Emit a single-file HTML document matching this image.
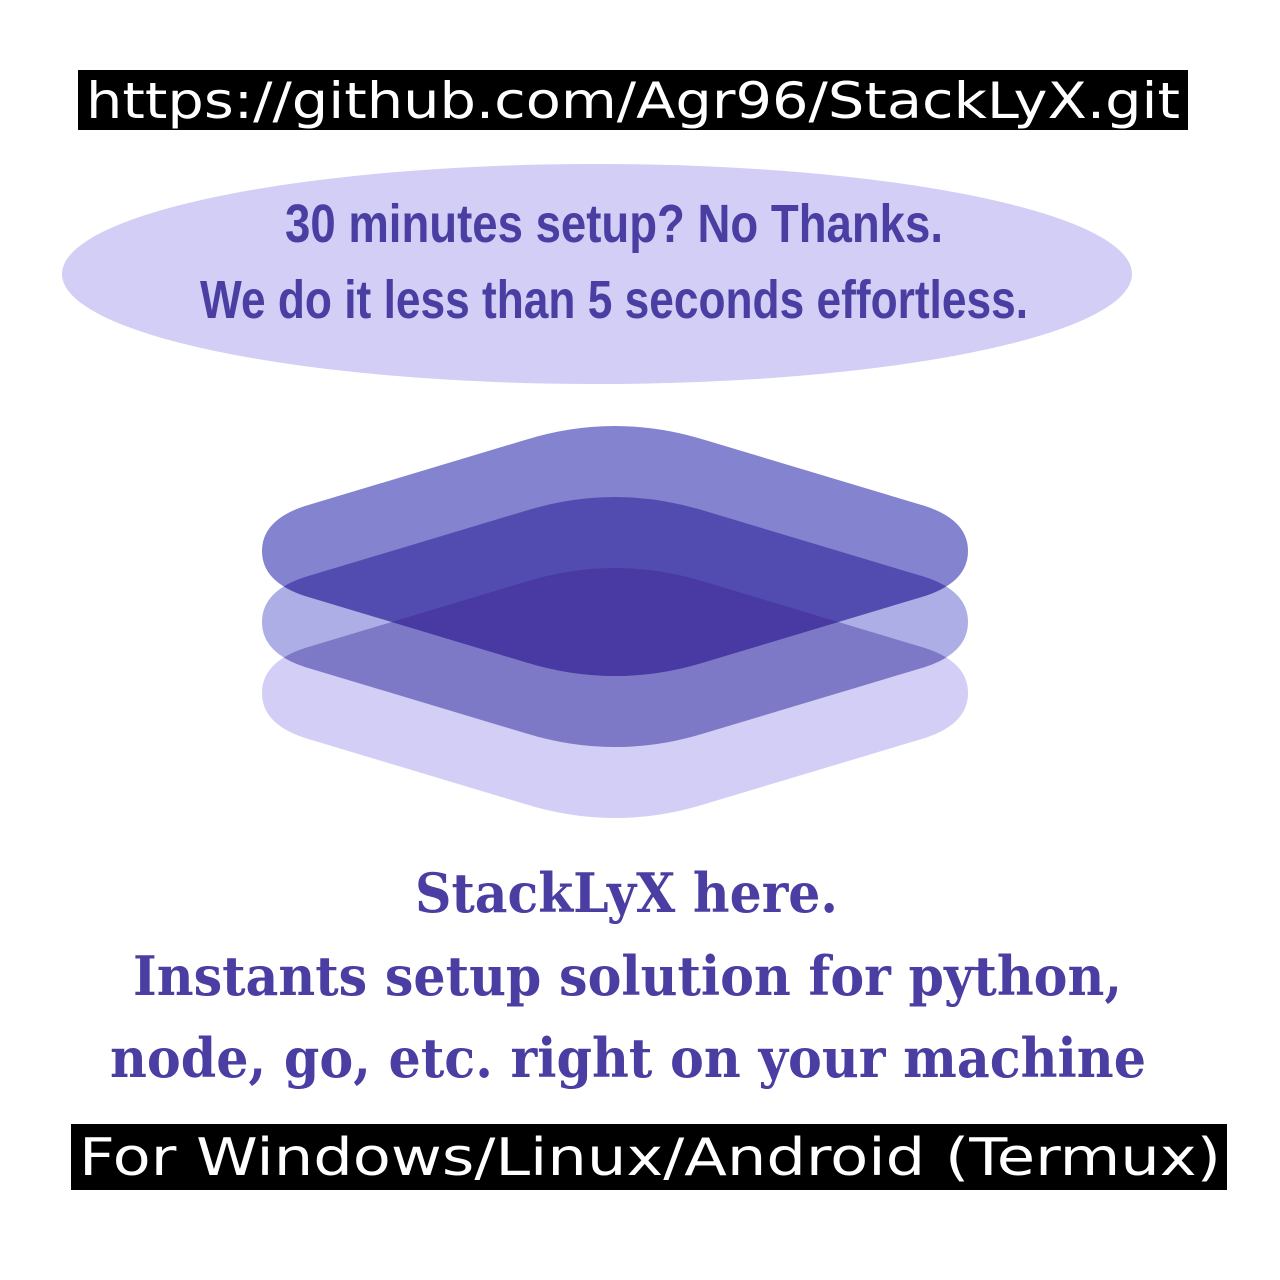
<!DOCTYPE html>
<html><head><meta charset="utf-8"><style>html,body{margin:0;padding:0;background:#fff}svg{display:block}</style></head>
<body>
<svg width="1280" height="1280" viewBox="0 0 1280 1280" xmlns="http://www.w3.org/2000/svg">
<defs>
<path id="sh" d="M305,506 L525,440 Q615,412 705,440 L925,506 Q968,520 968,551 Q968,582 925,596 L705,662 Q615,690 525,662 L305,596 Q262,582 262,551 Q262,520 305,506 Z"/>
<clipPath id="cBot"><use href="#sh" transform="translate(0,142)"/></clipPath>
<clipPath id="cMid"><use href="#sh" transform="translate(0,71)"/></clipPath>
</defs>
<rect width="1280" height="1280" fill="#fff"/>
<rect x="78" y="70" width="1110" height="60" fill="#000"/>
<text x="86" y="118" font-family="DejaVu Sans, sans-serif" font-size="50" fill="#fff" textLength="1094" lengthAdjust="spacingAndGlyphs">https://github.com/Agr96/StackLyX.git</text>

<ellipse cx="597" cy="274" rx="535" ry="110" fill="#d2cef5"/>
<g font-family="Liberation Sans Narrow, Liberation Sans, sans-serif" font-weight="bold" font-size="54" fill="#4a3ea3">
<text x="285" y="242" textLength="658" lengthAdjust="spacingAndGlyphs">30 minutes setup?  No Thanks.</text>
<text x="200" y="318" textLength="828" lengthAdjust="spacingAndGlyphs">We do it less than 5 seconds effortless.</text>
</g>

<use href="#sh" transform="translate(0,142)" fill="#d2cef5"/>
<use href="#sh" transform="translate(0,71)" fill="#aeaee6"/>
<g clip-path="url(#cBot)"><use href="#sh" transform="translate(0,71)" fill="#7d79c6"/></g>
<use href="#sh" fill="#8383cf"/>
<g clip-path="url(#cMid)"><use href="#sh" fill="#524cb0"/>
<g clip-path="url(#cBot)"><use href="#sh" fill="#4839a3"/></g></g>

<g font-family="DejaVu Serif, Liberation Serif, serif" font-weight="bold" font-size="54" fill="#4a3ea3">
<text x="415" y="912" textLength="423" lengthAdjust="spacingAndGlyphs">StackLyX here.</text>
<text x="133" y="995" textLength="989" lengthAdjust="spacingAndGlyphs">Instants setup solution for python,</text>
<text x="110" y="1077" textLength="1036" lengthAdjust="spacingAndGlyphs">node, go, etc. right on your machine</text>
</g>

<rect x="71" y="1124" width="1156" height="66" fill="#000"/>
<text x="79" y="1175" font-family="DejaVu Sans, sans-serif" font-size="52" fill="#fff" textLength="1142" lengthAdjust="spacingAndGlyphs">For Windows/Linux/Android (Termux)</text>
</svg>
</body></html>
